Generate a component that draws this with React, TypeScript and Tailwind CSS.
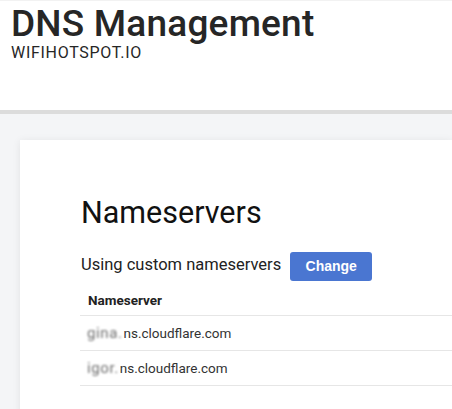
import React from "react";

const rows = [
  { prefix: "gina.", host: "ns.cloudflare.com" },
  { prefix: "igor.", host: "ns.cloudflare.com" },
];

export default function App() {
  return (
    <div className="w-[452px] h-[409px] overflow-hidden bg-[#f4f5f7] font-['Roboto',sans-serif] text-[#222]">
      <header className="h-[114px] bg-white border-t border-[#f2f2f2] border-b-4 border-b-[#dcdcdc] pl-[11px] pt-[5px]">
        <h1 className="text-[37px] leading-[36px] font-medium tracking-[0.2px] text-[#262626]">DNS Management</h1>
        <div className="text-[16px] leading-[14px] tracking-[0.7px] text-[#262626] mt-[4px]">WIFIHOTSPOT.IO</div>
      </header>
      <main className="pl-[20px] pt-[26px]">
        <section className="bg-white h-[300px] shadow-[0_1px_8px_rgba(0,0,0,0.08)] pl-[61px] pt-[55px]">
          <h2 className="text-[30.5px] leading-[36px] font-normal text-[#111]">Nameservers</h2>
          <div className="flex items-start mt-[21px]">
            <span className="text-[16.5px] leading-[24px] mt-[1px] text-[#222]">Using custom nameservers</span>
            <button className="ml-[9px] w-[82px] h-[29px] rounded-[3px] bg-[#4a76d1] text-white text-[14px] font-bold font-['Liberation_Sans',Arial,sans-serif] flex items-center justify-center">
              Change
            </button>
          </div>
          <div className="mt-[11px]">
            <div className="h-[24px] pl-[8px] text-[13.5px] leading-[16px] font-bold text-[#222] border-b border-[#e6e6e6] -ml-[1px]">
              Nameserver
            </div>
            {rows.map((r) => (
              <div
                key={r.prefix}
                className="h-[35px] -ml-[1px] pl-[7px] border-b border-[#e6e6e6] flex items-center text-[13.5px] text-[#333]"
              >
                <span className="blur-[1.2px] text-[#6f6f6f] text-[15px] tracking-[0.6px] mr-[1px]">{r.prefix}</span>
                <span>{r.host}</span>
              </div>
            ))}
          </div>
        </section>
      </main>
    </div>
  );
}
